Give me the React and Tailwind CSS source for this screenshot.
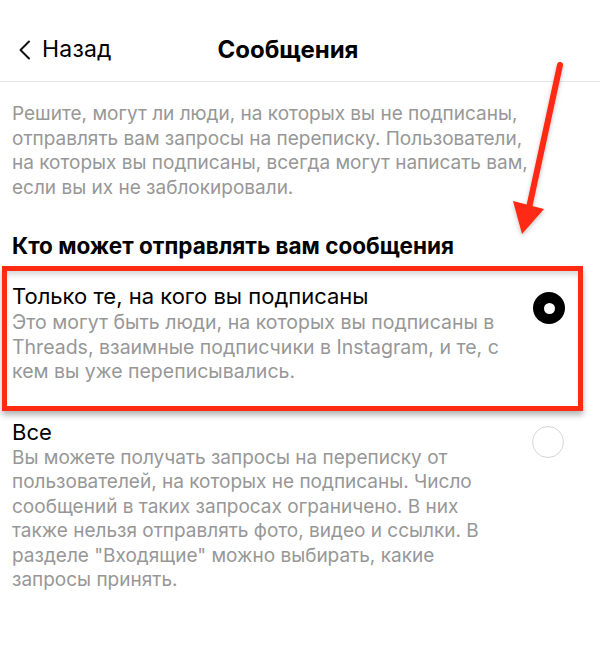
import React from "react";

function Arrow() {
  return (
    <svg
      className="pointer-events-none absolute left-0 top-0"
      width="600"
      height="662"
      viewBox="0 0 600 662"
    >
      <defs>
        <filter id="sh" x="-20%" y="-20%" width="140%" height="140%">
          <feDropShadow dx="0" dy="2" stdDeviation="2" floodColor="#000" floodOpacity="0.25" />
        </filter>
      </defs>
      <g filter="url(#sh)">
        <line x1="560" y1="65" x2="529" y2="208" stroke="#ff2a12" strokeWidth="6" strokeLinecap="round" />
        <polygon points="513,201 544,209 522,234" fill="#ff2a12" />
      </g>
    </svg>
  );
}

export default function App() {
  return (
    <div
      className="relative h-[662px] w-[600px] overflow-hidden bg-white text-black"
      style={{ fontFamily: 'Inter, "Liberation Sans", Arial, sans-serif' }}
    >
      {/* header */}
      <div className="grid h-[82px] grid-cols-[1fr_auto_1fr] items-center border-b-[1.5px] border-[#e6e6e6] pt-[18px]">
        <div className="flex items-center gap-[11px] pl-[18px]">
          <svg width="13" height="20" viewBox="0 0 13 20" fill="none">
            <path d="M11 1.5 L2.5 10 L11 18.5" stroke="#111" strokeWidth="2" strokeLinecap="round" strokeLinejoin="round" />
          </svg>
          <span className="text-[23px] tracking-[0.2px]">Назад</span>
        </div>
        <div className="mr-[24px] text-[24px] font-bold">Сообщения</div>
        <div />
      </div>

      <div className="px-3">
        <p className="mt-[20px] pr-[50px] text-[19px] leading-[24.5px] text-[#979797]">
          Решите, могут ли люди, на которых вы не подписаны, отправлять вам запросы на переписку. Пользователи, на которых вы подписаны, всегда могут написать вам, если вы их не заблокировали.
        </p>

        <h2 className="mt-[34px] text-[22.5px] font-bold leading-[24px]">
          Кто может отправлять вам сообщения
        </h2>

        {/* highlighted option */}
        <div className="-ml-[10px] mr-[5px] mt-[8px] flex items-start border-[5px] border-[#ff2a12] pb-[22px] pl-[5px] pr-[13px] pt-[13px] shadow-[0_4px_6px_rgba(0,0,0,0.3),inset_0_6px_6px_-3px_rgba(0,0,0,0.18)]">
          <div className="flex-1">
            <div className="text-[22px] leading-[24px]">Только те, на кого вы подписаны</div>
            <p className="mt-[2px] pr-[30px] text-[19.5px] leading-[24.5px] text-[#979797]">
              Это могут быть люди, на которых вы подписаны в Threads, взаимные подписчики в Instagram, и те, с кем вы уже переписывались.
            </p>
          </div>
          <div className="mt-[8px] flex h-[32px] w-[32px] items-center justify-center rounded-full bg-black">
            <div className="h-[11px] w-[11px] rounded-full bg-white" />
          </div>
        </div>

        {/* option 2 */}
        <div className="mt-[9px] flex items-start pr-[24px]">
          <div className="flex-1">
            <div className="text-[22px] leading-[24px]">Все</div>
            <p className="mt-[2px] pr-[40px] text-[19px] leading-[24.5px] text-[#979797]">
              Вы можете получать запросы на переписку от пользователей, на которых не подписаны. Число сообщений в таких запросах ограничено. В них также нельзя отправлять фото, видео и ссылки. В разделе "Входящие" можно выбирать, какие запросы принять.
            </p>
          </div>
          <div className="mt-[6px] h-[32px] w-[32px] rounded-full border-[1.5px] border-[#d6d6d6]" />
        </div>
      </div>

      <Arrow />
    </div>
  );
}
